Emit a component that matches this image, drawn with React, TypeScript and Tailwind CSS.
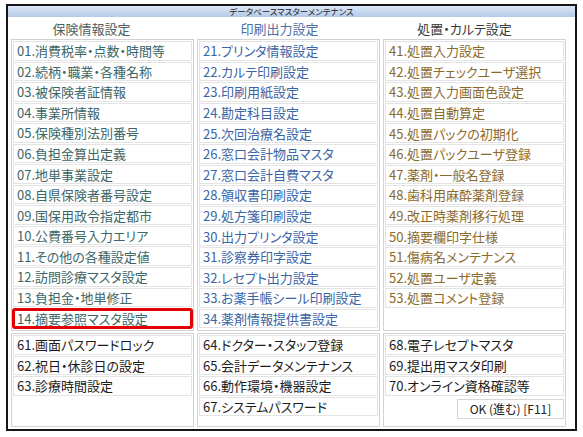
const HOKEN = [
  "01.消費税率・点数・時間等",
  "02.続柄・職業・各種名称",
  "03.被保険者証情報",
  "04.事業所情報",
  "05.保険種別法別番号",
  "06.負担金算出定義",
  "07.地単事業設定",
  "08.自県保険者番号設定",
  "09.国保用政令指定都市",
  "10.公費番号入力エリア",
  "11.その他の各種設定値",
  "12.訪問診療マスタ設定",
  "13.負担金・地単修正",
  "14.摘要参照マスタ設定",
];

const INSATSU = [
  "21.プリンタ情報設定",
  "22.カルテ印刷設定",
  "23.印刷用紙設定",
  "24.勘定科目設定",
  "25.次回治療名設定",
  "26.窓口会計物品マスタ",
  "27.窓口会計自費マスタ",
  "28.領収書印刷設定",
  "29.処方箋印刷設定",
  "30.出力プリンタ設定",
  "31.診察券印字設定",
  "32.レセプト出力設定",
  "33.お薬手帳シール印刷設定",
  "34.薬剤情報提供書設定",
];

const SHOCHI = [
  "41.処置入力設定",
  "42.処置チェックユーザ選択",
  "43.処置入力画面色設定",
  "44.処置自動算定",
  "45.処置パックの初期化",
  "46.処置パックユーザ登録",
  "47.薬剤・一般名登録",
  "48.歯科用麻酔薬剤登録",
  "49.改正時薬剤移行処理",
  "50.摘要欄印字仕様",
  "51.傷病名メンテナンス",
  "52.処置ユーザ定義",
  "53.処置コメント登録",
];

const SYSTEM_A = ["61.画面パスワードロック", "62.祝日・休診日の設定", "63.診療時間設定"];
const SYSTEM_B = [
  "64.ドクター・スタッフ登録",
  "65.会計データメンテナンス",
  "66.動作環境・機器設定",
  "67.システムパスワード",
];
const SYSTEM_C = ["68.電子レセプトマスタ", "69.提出用マスタ印刷", "70.オンライン資格確認等"];

function Row({ label, color, selected }: { label: string; color: string; selected?: boolean }) {
  return (
    <div
      className={
        selected
          ? "-mx-px flex h-[21px] items-center rounded-[3px] border-[3px] border-[#e50000] bg-white px-[2px] " + color
          : "flex h-[19.6px] items-center border border-[#e4e4e4] bg-white px-[3px] " + color
      }
    >
      <span className="whitespace-nowrap text-[13px] leading-none">{label}</span>
    </div>
  );
}

function MenuBox({ items, color, selected }: { items: string[]; color: string; selected?: string }) {
  return (
    <div className="flex h-[292px] w-[183px] flex-col gap-px border border-[#d2d2d2] p-px">
      {items.map((it) => (
        <Row key={it} label={it} color={color} selected={it === selected} />
      ))}
    </div>
  );
}

export default function App() {
  return (
    <div className="min-h-screen bg-white pl-[6px] pt-[4px] font-['Noto_Sans_CJK_JP','Noto_Sans',sans-serif] [font-feature-settings:'palt']">
      <div className="flex h-[427px] w-[571px] flex-col border-2 border-[#161616] bg-white">
        <div className="h-[11px] bg-gradient-to-b from-[#dbe6f5] to-[#b3cae8] text-center text-[8.5px] leading-[11px] text-[#222]">
          データベースマスターメンテナンス
        </div>

        <div className="flex h-[22px] gap-[3px] pl-[3px] text-[13px] leading-[24px]">
          <div className="w-[183px] pr-[22px] text-center text-[#4f5f60]">保険情報設定</div>
          <div className="w-[183px] pr-[18px] text-center text-[#4a6fa8]">印刷出力設定</div>
          <div className="w-[183px] pr-[20px] text-center text-[#3a3a3a]">処置・カルテ設定</div>
        </div>

        <div className="flex gap-[3px] pl-[3px]">
          <MenuBox items={HOKEN} color="text-[#3d6667]" selected="14.摘要参照マスタ設定" />
          <MenuBox items={INSATSU} color="text-[#3a65a6]" />
          <MenuBox items={SHOCHI} color="text-[#8a6a2b]" />
        </div>

        <div className="mt-[2px] flex gap-[3px] pl-[3px]">
          <div className="flex h-[94px] w-[183px] flex-col gap-px border border-[#d2d2d2] p-px">
            {SYSTEM_A.map((it) => (
              <Row key={it} label={it} color="text-[#1c1c1c]" />
            ))}
          </div>
          <div className="flex h-[94px] w-[183px] flex-col gap-px border border-[#d2d2d2] p-px">
            {SYSTEM_B.map((it) => (
              <Row key={it} label={it} color="text-[#1c1c1c]" />
            ))}
          </div>
          <div className="flex h-[94px] w-[183px] flex-col gap-px border border-[#d2d2d2] p-px">
            {SYSTEM_C.map((it) => (
              <Row key={it} label={it} color="text-[#1c1c1c]" />
            ))}
            <div className="mt-[2px] flex justify-end">
              <button
                type="button"
                className="flex h-[20px] w-[107px] items-center justify-center border border-[#d6d6d6] bg-white text-[12px] text-[#222]"
              >
                OK (進む) [F11]
              </button>
            </div>
          </div>
        </div>
      </div>
    </div>
  );
}
